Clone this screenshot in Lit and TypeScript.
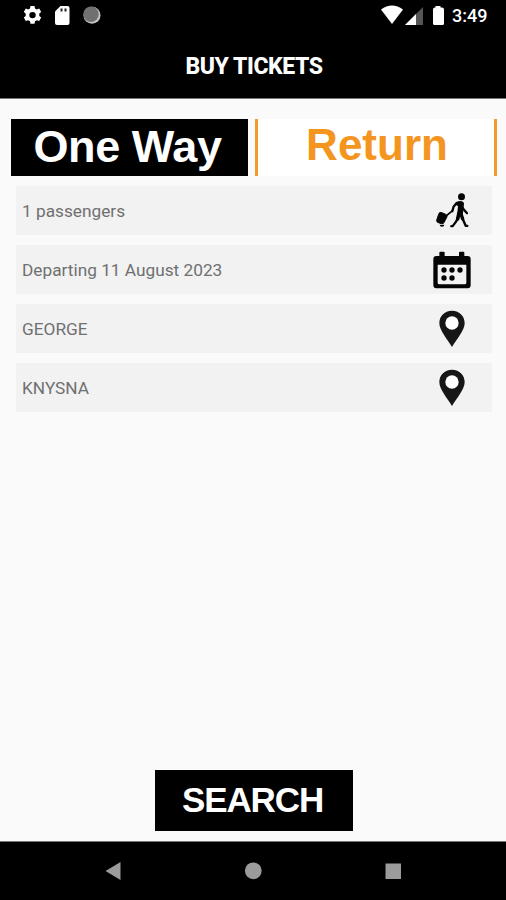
import { LitElement, html, css, svg } from "lit";
import { customElement, property } from "lit/decorators.js";

const walker = svg`
  <circle cx="88.500" cy="24.500" r="10.500"/>
  <path d="M68 46q3-7 11-8q16-2 17 8l-3 28q-1 6-8 6q-9 0-9-7l2-20z"/>
  <g fill="none" stroke="#050505" stroke-linecap="round" stroke-linejoin="round">
    <path d="M74 44l-9 10l-4 14" stroke-width="7"/>
    <path d="M61 67l-21 17" stroke-width="5"/>
    <path d="M92 58l4 6l9 10" stroke-width="7"/>
    <path d="M81 74l-4 17" stroke-width="11"/>
    <path d="M77 91l-6 10l-9 12h-4" stroke-width="7"/>
    <path d="M86 74l6 17" stroke-width="10"/>
    <path d="M92 91l9 21h5" stroke-width="7"/>
  </g>
  <path d="M28 72l12 5q6 3 5 8l-9 17q-2 5-7 4l-11-4q-5-2-4-7l6-18q2-7 8-5z" stroke="#050505" stroke-width="3"/>
  <path d="M23 108q6 3 14 0q0 7-7 7t-7-7z"/>`;
const calendar = svg`
  <path fill-rule="evenodd" d="M80 227h9v-10q0-3 3-3h10q3 0 3 3v10h43v-10q0-3 3-3h10q3 0 3 3v10h10q9 0 9 9v79q0 9-9 9h-94q-9 0-9-9v-79q0-9 9-9zM84 253v54q0 5 5 5h76q5 0 5-5v-54z"/>
  ${[[103, 269], [127, 269], [151, 269], [103, 293], [127, 293]].map(
    ([x, y]) => svg`<circle cx=${x} cy=${y} r="8"/>`
  )}`;
const pin = svg`
  <path d="M127 43c-23 0-38 17-38 37c0 23 24 48 38 72c14-24 38-49 38-72c0-20-15-37-38-37z"/>
  <circle cx="127" cy="80" r="20" fill="#fff"/>`;

@customElement("field-row")
class FieldRow extends LitElement {
  @property() label = "";
  @property() icon = "";

  static styles = css`
    :host {
      display: flex;
      align-items: center;
      justify-content: space-between;
      height: 49px;
      padding: 0 20px 0 6px;
      background: #f2f2f2;
      color: #707070;
      font: 17.25px/24px Roboto, sans-serif;
    }
    svg { width: 40px; height: 40px; fill: #050505; }
    .pin { fill: #161616; }
  `;

  render() {
    const shape =
      this.icon === "walker"
        ? html`<svg viewBox="0 7.5 120 120">${walker}</svg>`
        : this.icon === "calendar"
        ? html`<svg viewBox="67 209 120 120">${calendar}</svg>`
        : html`<svg class="pin" viewBox="67 38 120 120">${pin}</svg>`;
    return html`<span class="label">${this.label}</span>${shape}`;
  }
}

@customElement("app-root")
class AppRoot extends LitElement {
  static styles = css`
    :host {
      display: flex;
      flex-direction: column;
      width: 506px;
      height: 900px;
      overflow: hidden;
      background: #fafafa;
      font-family: Roboto, sans-serif;
    }
    header { height: 98px; background: #000; color: #fff; border-bottom: 1px solid #777; box-sizing: content-box; }
    .status { display: flex; justify-content: space-between; height: 32px; }
    .status svg { display: block; width: 130px; height: 32px; }
    .right { display: flex; }
    .status .right svg { width: 75px; }
    .time { width: 54px; font: 500 18px/32px Roboto, sans-serif; }
    h1 {
      margin: 0;
      padding-left: 2px;
      font: 800 23px/70px Roboto, sans-serif;
      letter-spacing: -0.45px;
      text-align: center;
    }
    .tabs { display: flex; gap: 7px; margin: 18px 9px 0 11px; height: 57px; }
    header { flex: none; }
    .tabs { margin-top: 20px; }
    .tab { box-sizing: border-box; font: bold 45px/55px "Liberation Sans", Arial, sans-serif; text-align: center; white-space: nowrap; }
    .one { width: 237px; padding-right: 4px; background: #000; color: #fff; letter-spacing: -0.4px; }
    .return { width: 242px; padding-left: 2px; background: #fff; color: #f4951f; border-left: 3px solid #f29a2e; border-right: 3px solid #f29a2e; line-height: 52px; font-size: 44px; }
    .fields { display: grid; gap: 10px; margin: 10px 14px 0 16px; }
    .search {
      margin: auto auto 10px 155px;
      width: 198px;
      height: 61px;
      border: 0;
      padding: 0 3px 2px 0;
      background: #000;
      color: #fff;
      font: bold 35px/58px "Liberation Sans", Arial, sans-serif;
      letter-spacing: -1.1px;
      text-align: center;
    }
    nav { height: 58px; background: #000; border-top: 1px solid #777; }
    nav svg { display: block; fill: #9b9b9b; }
  `;

  render() {
    return html`
      <header>
        <div class="status">
          <svg viewBox="0 0 130 32">
            <g transform="translate(32.5 15.3)" fill="#fff">
              <path fill-rule="evenodd" d="M-2-9.4h4l.5 2.5 1.8 1 2.4-.9 2 3.5-1.9 1.6v2.4l1.9 1.6-2 3.5-2.4-.9-1.8 1-.5 2.6h-4l-.5-2.6-1.8-1-2.4.9-2-3.5 1.9-1.6v-2.4l-1.9-1.6 2-3.5 2.4.9 1.8-1zM0-3.400a3 3 0 1 0 0 6.400a3 3 0 1 0 0-6.400z"/>
            </g>
            <path d="M60.500 6H67.500q2 0 2 2v15q0 2-2 2H57q-2 0-2-2V11.500z" fill="#fff"/>
            <path d="M60.500 8.500h2v3h-2zM64.500 8.500h2v3h-2z" fill="#222"/>
            <circle cx="92" cy="15.300" r="8.500" fill="#c4c4c4"/>
            <circle cx="91" cy="14.300" r="7.700" fill="#707070"/>
          </svg>
          <div class="right">
            <svg viewBox="377 0 75 32">
              <path d="M381 9.500Q392 1.500 403 9.500L392 24z" fill="#fff"/>
              <path d="M423 7v18h-18z" fill="#555"/>
              <path d="M416 14v11h-11z" fill="#fff"/>
              <path d="M435.500 7.500V6h5v1.500h1.500q2 0 2 2v14q0 1.500-1.500 1.500h-8q-1.500 0-1.500-1.500v-14q0-2 2-2z" fill="#fff"/>
            </svg>
            <span class="time">3:49</span>
          </div>
        </div>
        <h1>BUY TICKETS</h1>
      </header>
      <div class="tabs">
        <div class="tab one">One Way</div>
        <div class="tab return">Return</div>
      </div>
      <div class="fields">
        <field-row label="1 passengers" icon="walker"></field-row>
        <field-row label="Departing 11 August 2023" icon="calendar"></field-row>
        <field-row label="GEORGE" icon="pin"></field-row>
        <field-row label="KNYSNA" icon="pin"></field-row>
      </div>
      <button class="search">SEARCH</button>
      <nav>
        <svg width="506" height="58" viewBox="0 842 506 58">
          <path d="M105.500 871l15-9v18z"/>
          <circle cx="253.300" cy="870.800" r="8.400"/>
          <path d="M385.500 863.500h15.500v15.500h-15.500z"/>
        </svg>
      </nav>
    `;
  }
}
